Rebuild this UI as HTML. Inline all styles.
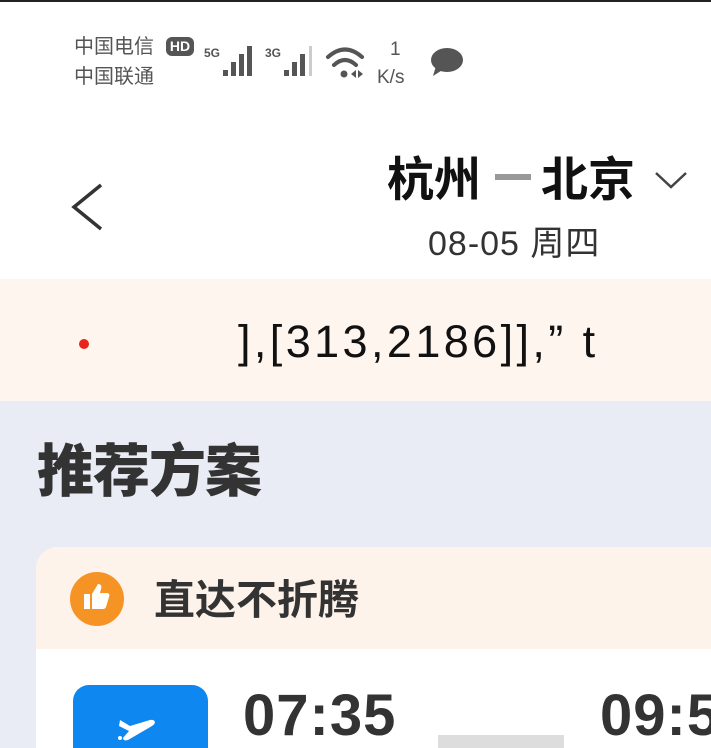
<!DOCTYPE html>
<html><head><meta charset="utf-8"><style>
*{margin:0;padding:0;box-sizing:border-box}
html,body{width:711px;height:748px;overflow:hidden}
body{background:#fff;font-family:"Liberation Sans","Noto Sans CJK SC",sans-serif;position:relative}
#w{position:absolute;left:0;top:0;width:711px;height:748px;overflow:hidden}
.a{position:absolute;white-space:nowrap}
</style></head><body><div id="w">
<div class="a" style="left:0;top:0;width:711px;height:2px;background:#222"></div>
<div class="a" style="left:74px;top:32px;font-size:20px;color:#555;line-height:30px">中国电信<br>中国联通</div>
<div class="a" style="left:166px;top:37px;width:28px;height:19px;background:#555;color:#fff;font-size:14px;font-weight:bold;border-radius:6px;text-align:center;line-height:19px">HD</div>
<svg class="a" style="left:0;top:0" width="711" height="100" viewBox="0 0 711 100">
<text x="204" y="57" font-size="12" font-weight="bold" fill="#555" font-family="Liberation Sans">5G</text>
<g fill="#555"><rect x="223" y="70" width="5" height="6"/><rect x="231" y="62" width="5" height="14"/><rect x="239" y="54" width="5" height="22"/><rect x="247" y="46" width="5" height="30"/></g>
<text x="265" y="57" font-size="12" font-weight="bold" fill="#555" font-family="Liberation Sans">3G</text>
<g fill="#555"><rect x="284" y="70" width="5" height="6"/><rect x="292" y="62" width="5" height="14"/><rect x="300" y="54" width="5" height="22"/></g><rect x="309" y="46" width="3" height="30" fill="#ccc"/>
<g fill="none" stroke="#555" stroke-width="4" stroke-linecap="round"><path d="M328 57 Q345 42 362 57"/><path d="M334 65 Q345 55 356 65"/></g><circle cx="344" cy="74" r="3.5" fill="#555"/>
<path d="M351 74l5-4v8zM363 74l-5-4v8z" fill="#555"/>
<text x="390" y="55" font-size="19" fill="#555" font-family="Liberation Sans">1</text>
<text x="377" y="83" font-size="19" fill="#555" font-family="Liberation Sans">K/s</text>
<ellipse cx="447" cy="60" rx="16" ry="12" fill="#555"/><path d="M436 66l-3 10 11-7z" fill="#555"/>
</svg>
<svg class="a" style="left:70px;top:183px" width="36" height="48"><path d="M31 2L4 24l27 22" fill="none" stroke="#333" stroke-width="3.5"/></svg>
<div class="a" style="left:387px;top:152px;font-size:47px;font-weight:bold;color:#111;line-height:56px">杭州</div>
<div class="a" style="left:495px;top:174px;width:36px;height:6px;background:#999"></div>
<div class="a" style="left:541px;top:152px;font-size:47px;font-weight:bold;color:#111;line-height:56px">北京</div>
<svg class="a" style="left:654px;top:170px" width="34" height="20"><path d="M2 3l15 14L32 3" fill="none" stroke="#444" stroke-width="2.5"/></svg>
<div class="a" style="left:428px;top:222px;font-size:34px;color:#333;line-height:44px;letter-spacing:1px">08-05 周四</div>
<div class="a" style="left:0;top:279px;width:711px;height:122px;background:#fef5ef"></div>
<div class="a" style="left:79px;top:339px;width:10px;height:10px;border-radius:50%;background:#e8251b"></div>
<div class="a" style="left:238px;top:314px;font-size:45px;color:#111;line-height:56px;letter-spacing:3.4px">],[313,2186]],” t</div>
<div class="a" style="left:0;top:401px;width:711px;height:347px;background:#e9ecf4"></div>
<div class="a" style="left:37px;top:437px;font-size:57px;font-weight:900;color:#333;line-height:70px;letter-spacing:-1px">推荐方案</div>
<div class="a" style="left:36px;top:547px;width:675px;height:201px;background:#fff;border-radius:22px 0 0 0;overflow:hidden">
<div style="height:102px;background:#fef3ea"></div></div>
<div class="a" style="left:70px;top:572px;width:54px;height:54px;border-radius:50%;background:#f59325"></div>
<svg class="a" style="left:82px;top:582px" width="30" height="32"><rect x="2" y="12" width="6" height="15" fill="#fff"/><path d="M10 12l6-10c3 0 4 2 3 5l-1 4h7c2 0 3 2 2 4l-3 10c-1 2-2 2-4 2h-10z" fill="#fff"/></svg>
<div class="a" style="left:154px;top:574px;font-size:41px;font-weight:bold;color:#333;line-height:52px">直达不折腾</div>
<div class="a" style="left:73px;top:685px;width:135px;height:63px;border-radius:16px 16px 0 0;background:#0f87f0"></div>
<svg class="a" style="left:112px;top:710px" width="56" height="36"><path d="M8 10l10 6 20-6c5-1 7 3 2 6L16 30c-3 1-5 0-5-2l6-7-10-5z" fill="#fff"/><circle cx="8" cy="28" r="2" fill="#fff"/></svg>
<div class="a" style="left:243px;top:684px;font-size:58px;font-weight:bold;color:#333;line-height:64px;letter-spacing:1px">07:35</div>
<div class="a" style="left:438px;top:735px;width:126px;height:13px;background:#ddd"></div>
<div class="a" style="left:600px;top:684px;width:111px;overflow:hidden;font-size:58px;font-weight:bold;color:#333;line-height:64px;letter-spacing:1px">09:55</div>
</div></body></html>
